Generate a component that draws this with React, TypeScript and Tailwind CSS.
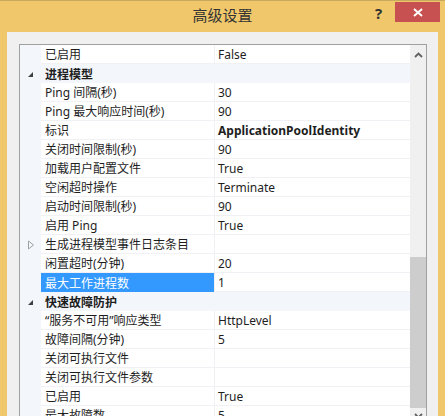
import React from "react";

type Row = {
  label: string;
  value?: string;
  kind?: "row" | "cat" | "expand";
  bold?: boolean;
  selected?: boolean;
};

const rows: Row[] = [
  { label: "已启用", value: "False" },
  { label: "进程模型", kind: "cat" },
  { label: "Ping 间隔(秒)", value: "30" },
  { label: "Ping 最大响应时间(秒)", value: "90" },
  { label: "标识", value: "ApplicationPoolIdentity", bold: true },
  { label: "关闭时间限制(秒)", value: "90" },
  { label: "加载用户配置文件", value: "True" },
  { label: "空闲超时操作", value: "Terminate" },
  { label: "启动时间限制(秒)", value: "90" },
  { label: "启用 Ping", value: "True" },
  { label: "生成进程模型事件日志条目", value: "", kind: "expand" },
  { label: "闲置超时(分钟)", value: "20" },
  { label: "最大工作进程数", value: "1", selected: true },
  { label: "快速故障防护", kind: "cat" },
  { label: "\u201C服务不可用\u201D响应类型", value: "HttpLevel" },
  { label: "故障间隔(分钟)", value: "5" },
  { label: "关闭可执行文件", value: "" },
  { label: "关闭可执行文件参数", value: "" },
  { label: "已启用", value: "True" },
  { label: "最大故障数", value: "5" },
];

function Gutter({ kind }: { kind?: Row["kind"] }) {
  return (
    <div className="w-[21px] shrink-0 bg-[#f3f6fb] flex items-center justify-center">
      {kind === "cat" && (
        <svg width="7" height="7" viewBox="0 0 7 7" className="ml-[-1px] mt-[1px]">
          <polygon points="6,1 6,6 1,6" fill="#404040" />
        </svg>
      )}
      {kind === "expand" && (
        <svg width="8" height="10" viewBox="0 0 8 10" className="mt-[1px]">
          <polygon points="1.5,1 6.5,5 1.5,9" fill="none" stroke="#a0a0a0" strokeWidth="1" />
        </svg>
      )}
    </div>
  );
}

function GridRow({ r }: { r: Row }) {
  if (r.kind === "cat") {
    return (
      <div className="flex h-[19px] shrink-0 bg-[#f3f6fb]">
        <Gutter kind="cat" />
        <div className="flex-1 flex items-center pl-[4px] pt-[2px] font-bold text-[#1e1e1e]">
          {r.label}
        </div>
      </div>
    );
  }
  return (
    <div className="flex h-[19px] shrink-0">
      <Gutter kind={r.kind} />
      <div
        className={
          r.selected
            ? "w-[173px] shrink-0 flex items-center pl-[4px] pt-[2px] bg-[#3399ff] text-white whitespace-nowrap overflow-hidden"
            : "w-[173px] shrink-0 flex items-center pl-[4px] pt-[2px] bg-white text-[#1e1e1e] border-b border-[#f0f0f5] whitespace-nowrap overflow-hidden"
        }
      >
        {r.label}
      </div>
      <div className="w-px shrink-0 bg-[#f0f0f5]" />
      <div
        className={
          "flex-1 flex items-center pl-[3px] pt-[2px] bg-white text-[#1e1e1e] border-b border-[#f0f0f5] " +
          (r.bold ? "font-bold" : "")
        }
      >
        {r.value}
      </div>
    </div>
  );
}

export default function App() {
  return (
    <div
      className="w-[445px] h-[416px] bg-[#f0c86b] relative overflow-hidden flex flex-col border-t border-[#c8a85c]"
      style={{ fontFamily: '"Noto Sans", "Noto Sans CJK SC", sans-serif' }}
    >
      <div className="h-[31px] shrink-0 flex items-center justify-center">
        <span className="text-[15px] text-[#333333] mt-[-2px]">高级设置</span>
      </div>
      <div className="absolute left-[375px] top-[2px] text-[15px] font-bold text-[#333333] leading-[20px]">
        ?
      </div>
      <div className="absolute left-[395px] top-[1px] w-[45px] h-[20px] bg-[#c75050] flex items-center justify-center">
        <svg width="10" height="9" viewBox="0 0 10 9">
          <path d="M1 1 L9 8 M9 1 L1 8" stroke="white" strokeWidth="2" />
        </svg>
      </div>
      <div className="flex-1 ml-[7px] mr-[7px] bg-[#f0f0f0] pt-[12px] pl-[12px] pr-[11px] flex flex-col min-h-0 text-[12px]">
        <div className="flex-1 flex border-t border-l border-r border-[#a0a0a0] min-h-0 overflow-hidden">
          <div className="flex-1 flex flex-col min-w-0">
            {rows.map((r, i) => (
              <GridRow key={i} r={r} />
            ))}
          </div>
          <div className="w-[16px] shrink-0 bg-[#f0f0f0] flex flex-col">
            <div className="h-[20px] flex items-center justify-center shrink-0">
              <svg width="9" height="6" viewBox="0 0 9 6">
                <path d="M1 5 L4.5 1.5 L8 5" fill="none" stroke="#606060" strokeWidth="1.8" />
              </svg>
            </div>
            <div className="h-[192px] shrink-0" />
            <div className="h-[151px] shrink-0 bg-[#cdcdcd]" />
            <div className="h-[20px] flex items-start justify-center pt-[5px] shrink-0">
              <svg width="9" height="6" viewBox="0 0 9 6">
                <path d="M1 1 L4.5 4.5 L8 1" fill="none" stroke="#606060" strokeWidth="1.8" />
              </svg>
            </div>
          </div>
        </div>
      </div>
    </div>
  );
}
